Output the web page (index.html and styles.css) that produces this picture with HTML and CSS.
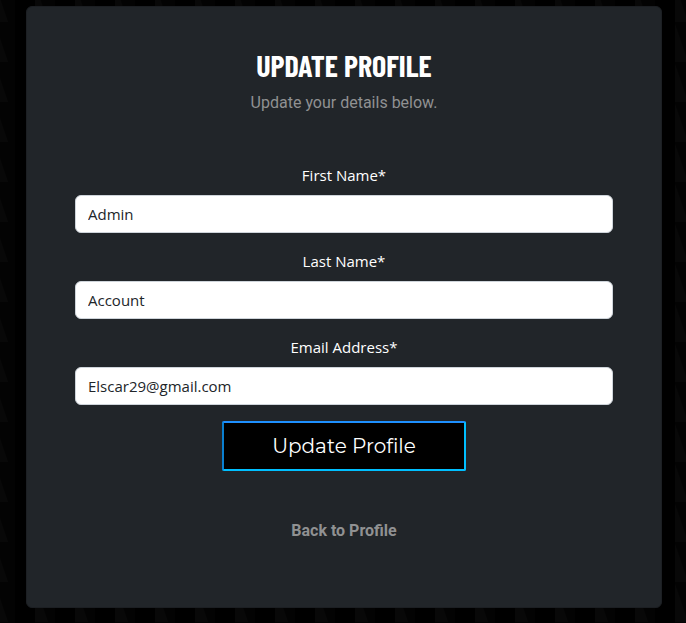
FILE: index.html
```html
<!DOCTYPE html>
<html lang="en">
<head>
<meta charset="utf-8">
<meta name="viewport" content="width=device-width, initial-scale=1">
<title>Update Profile</title>
<link rel="stylesheet" href="styles.css">
</head>
<body>
<svg class="backdrop" aria-hidden="true">
  <defs>
    <pattern id="weave" x="35" y="22" width="40" height="40" patternUnits="userSpaceOnUse">
      <rect width="20" height="40" fill="#030303"/>
      <path d="M0 2L13 40H0Z" fill="#080808"/>
    </pattern>
  </defs>
  <rect width="100%" height="100%" fill="#000"/>
  <rect width="100%" height="100%" fill="url(#weave)"/>
</svg>
<main class="card">
  <h1 class="title">Update Profile</h1>
  <p class="lead">Update your details below.</p>
  <form class="form">
    <div class="field">
      <label for="first">First Name*</label>
      <input id="first" type="text" value="Admin" required>
    </div>
    <div class="field">
      <label for="last">Last Name*</label>
      <input id="last" type="text" value="Account" required>
    </div>
    <div class="field">
      <label for="email">Email Address*</label>
      <input id="email" type="email" value="Elscar29@gmail.com" required>
    </div>
    <button class="submit" type="submit">Update Profile</button>
  </form>
  <a class="back" href="#">Back to Profile</a>
</main>
</body>
</html>
```
FILE: styles.css
```css
* {
  box-sizing: border-box;
}

body {
  margin: 0;
  padding: 6px 24px 15px 26px;
  background: #000;
  color: #fff;
  font: 16px/24px "Segoe UI", "Open Sans", "Noto Sans", sans-serif;
}

.backdrop {
  position: fixed;
  inset: 0;
  z-index: -1;
  width: 100%;
  height: 100%;
}

.card {
  display: flex;
  flex-direction: column;
  align-items: center;
  padding: 40px 48px 64px;
  background: #212529;
  border: 1px solid #1c1f23;
  border-radius: 6px;
  text-align: center;
}

.title {
  margin: 0 0 8px;
  font: bold 30px/36px "Barlow Condensed", "Liberation Sans Narrow", "Roboto Condensed", "Roboto", sans-serif;
  text-transform: uppercase;
}

.lead {
  margin: 0 0 48px;
  color: #909192;
  font-family: Roboto, sans-serif;
}

.form {
  display: flex;
  flex-direction: column;
  align-items: center;
  gap: 16px;
  width: 100%;
  margin-bottom: 48px;
}

.field {
  display: flex;
  flex-direction: column;
  gap: 8px;
  width: 100%;
  font-size: 15px;
}

.field input {
  width: 100%;
  height: 38px;
  padding: 6px 12px;
  background: #fff;
  border: 1px solid #ced4da;
  border-radius: 6px;
  color: #212529;
  font: inherit;
}

.submit {
  height: 50px;
  padding: 0 48px;
  background: #000;
  border: 2px solid;
  border-color: #1e90ff #00bfff #00bfff #0a7fd0;
  border-radius: 2px;
  color: #fff;
  font: 20px/24px Montserrat, Inter, sans-serif;
}

.back {
  color: #909192;
  font-family: Roboto, sans-serif;
  font-weight: 700;
  text-decoration: none;
}
```
